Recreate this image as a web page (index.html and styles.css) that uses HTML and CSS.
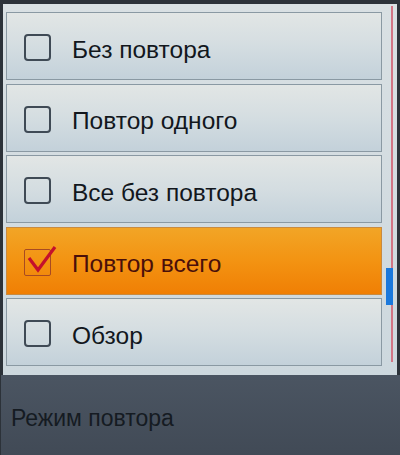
FILE: index.html
```html
<!DOCTYPE html>
<html lang="ru">

<head>
    <meta charset="UTF-8">
    <meta name="viewport" content="width=device-width, initial-scale=1.0">
    <title>Режим повтора</title>
    <link rel="stylesheet" href="styles.css">
</head>

<body>
    <div class="screen">
        <div class="panel">
            <div class="list">
                <div class="row">
                    <span class="box"></span>
                    <span class="label">Без повтора</span>
                </div>
                <div class="row">
                    <span class="box"></span>
                    <span class="label">Повтор одного</span>
                </div>
                <div class="row">
                    <span class="box"></span>
                    <span class="label">Все без повтора</span>
                </div>
                <div class="row selected">
                    <span class="box checked">
                        <svg width="36" height="32" viewBox="0 0 36 32">
                            <polyline points="7,15 16,27 33,4" fill="none" stroke="#c4102c" stroke-width="3.2" stroke-linejoin="miter" />
                        </svg>
                    </span>
                    <span class="label">Повтор всего</span>
                </div>
                <div class="row">
                    <span class="box"></span>
                    <span class="label">Обзор</span>
                </div>
            </div>
            <div class="scrollbar">
                <div class="thumb"></div>
            </div>
        </div>
        <div class="footer">Режим повтора</div>
    </div>
</body>

</html>
```

FILE: styles.css
```css
body {
    margin: 0;
    padding: 0;
    background-color: #22272d;
    font-family: 'Liberation Sans', Arial, sans-serif;
}

.screen {
    width: 400px;
    height: 455px;
    padding-top: 4px;
    box-sizing: border-box;
    display: flex;
    flex-direction: column;
    background-color: #2c3239;
}

.panel {
    height: 371px;
    margin-left: 3px;
    margin-right: 3px;
    display: flex;
    background: linear-gradient(#d9e0e3, #cdd8de);
}

.list {
    width: 379px;
    margin-left: 3px;
    padding-top: 8px;
    display: flex;
    flex-direction: column;
    gap: 3.5px;
}

.row {
    height: 68px;
    box-sizing: border-box;
    border: 1px solid #8a99a3;
    background: linear-gradient(#e2e6e5, #d4dde1 50%, #c3d1da);
    display: flex;
    align-items: center;
    padding-left: 17px;
    padding-top: 3px;
}

.box {
    width: 27px;
    height: 27px;
    box-sizing: border-box;
    border: 2px solid #3f4a55;
    border-radius: 4px;
    position: relative;
}

.label {
    margin-left: 21px;
    margin-top: 4px;
    font-size: 24.5px;
    color: #12171d;
}

.row.selected {
    background: linear-gradient(#f2a526, #f39312 50%, #f07f04);
    border-color: #c88a40;
}

.row.selected .label {
    color: #4a0f0a;
}

.box.checked {
    border: 1.5px solid #a84a22;
    border-radius: 2px;
}

.box.checked svg {
    position: absolute;
    left: -3px;
    top: -7px;
}

.scrollbar {
    width: 12px;
    margin-left: 3px;
    display: flex;
    flex-direction: column;
    align-items: flex-start;
    background: linear-gradient(90deg, transparent 6px, #d27585 6px, #d27585 8px, transparent 8px) no-repeat 0 2px / 12px 356px;
}

.thumb {
    width: 7px;
    height: 37px;
    margin-top: 264px;
    margin-left: 1px;
    background-color: #1a78dc;
}

.footer {
    flex: 1;
    background: linear-gradient(#4b5562, #414a56);
    color: #151b22;
    font-size: 23px;
    line-height: 23px;
    padding-top: 32px;
    padding-left: 10px;
    margin-left: 1px;
}
```
